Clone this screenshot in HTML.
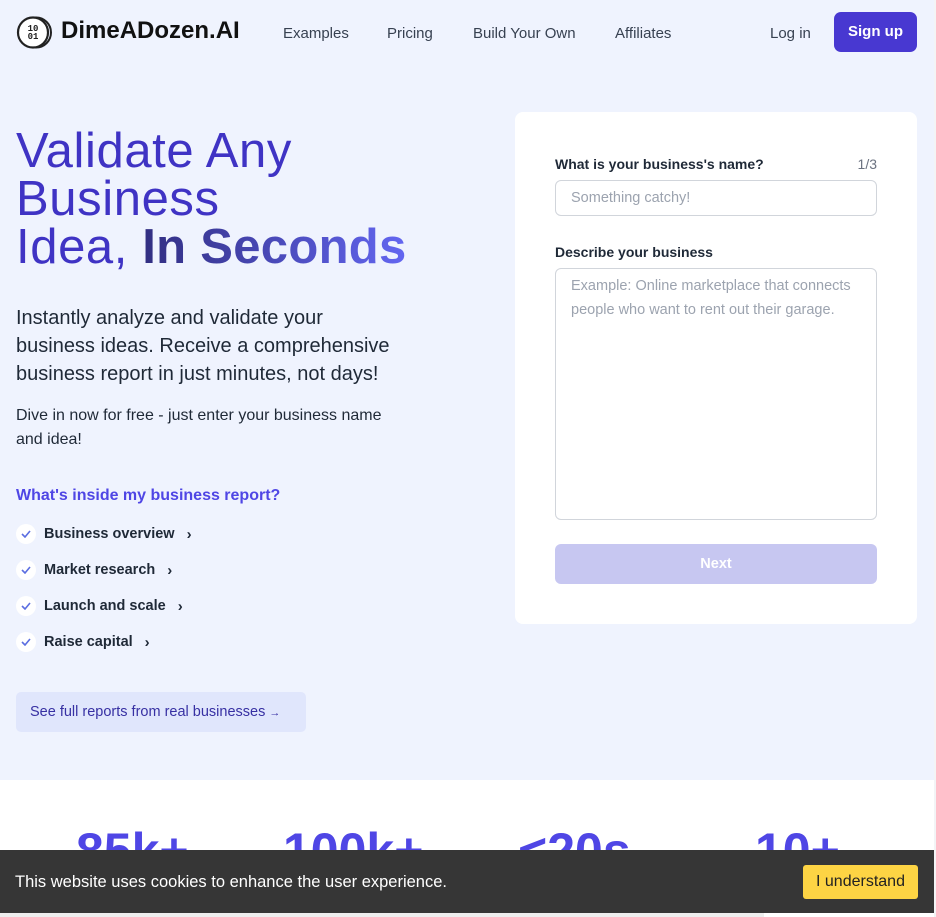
<!DOCTYPE html>
<html><head><meta charset="utf-8"><style>
*{box-sizing:border-box;margin:0;padding:0}
body{width:936px;height:917px;overflow:hidden;background:#eff3fe;font-family:"Liberation Sans",sans-serif;position:relative;color:#1f2937}
.a{position:absolute;white-space:nowrap}
.nav{font-size:15px;color:#374151;top:25px}
h1{position:absolute;left:16px;top:127px;font-size:49px;line-height:48px;font-weight:400;color:#3f33c4;letter-spacing:0.6px}
h1 b{background:linear-gradient(90deg,#312e81,#6366f1);-webkit-background-clip:text;background-clip:text;color:transparent;letter-spacing:0.3px}
.p1{left:16px;top:304px;font-size:20px;line-height:28px;color:#1f2937}
.p2{left:16px;top:404px;font-size:16px;line-height:24px;color:#1f2937}
.li{left:16px;font-size:14.5px;font-weight:bold;color:#1f2937;display:flex;align-items:center}
.ck{width:20px;height:20px;border-radius:50%;background:#fff;margin-right:8px;display:flex;align-items:center;justify-content:center}
.card{position:absolute;left:515px;top:112px;width:402px;height:512px;background:#fff;border-radius:8px}
.lbl{font-size:14px;font-weight:bold;color:#1f2937}
.inp{position:absolute;border:1px solid #d1d5db;border-radius:6px;background:#fff;color:#9ca3af;font-size:14.5px;padding:0 15px}
</style></head><body>
<svg class="a" style="left:16px;top:16px" width="37" height="33" viewBox="0 0 37 33"><ellipse cx="20" cy="16.5" rx="15" ry="15" fill="none" stroke="#222" stroke-width="2"/><circle cx="17" cy="16.5" r="15" fill="#fff" stroke="#222" stroke-width="2.2"/><text x="17" y="15" font-size="9" font-weight="bold" text-anchor="middle" font-family="Liberation Mono" fill="#222">10</text><text x="17" y="23" font-size="9" font-weight="bold" text-anchor="middle" font-family="Liberation Mono" fill="#222">01</text></svg>
<div class="a" style="left:61px;top:17px;font-size:24px;font-weight:bold;color:#111">DimeADozen.AI</div>
<div class="a nav" style="left:283px">Examples</div>
<div class="a nav" style="left:387px">Pricing</div>
<div class="a nav" style="left:473px">Build Your Own</div>
<div class="a nav" style="left:615px">Affiliates</div>
<div class="a nav" style="left:770px">Log in</div>
<div class="a" style="left:834px;top:12px;width:83px;height:40px;background:#4838d1;border-radius:7px;color:#fff;font-weight:bold;font-size:15px;text-align:center;line-height:39px">Sign up</div>
<h1>Validate Any<br>Business<br>Idea, <b>In Seconds</b></h1>
<div class="a p1">Instantly analyze and validate your<br>business ideas. Receive a comprehensive<br>business report in just minutes, not days!</div>
<div class="a p2">Dive in now for free - just enter your business name<br>and idea!</div>
<div class="a" style="left:16px;top:487px;font-size:16px;font-weight:bold;color:#4f46e5">What's inside my business report?</div>
<div class="a li" style="top:524px"><span class="ck"><svg width="10" height="8"><path d="M1 4l3 3 5-6" fill="none" stroke="#5b6ee1" stroke-width="1.6"/></svg></span>Business overview<span style="margin-left:12px;font-size:15px">›</span></div>
<div class="a li" style="top:560px"><span class="ck"><svg width="10" height="8"><path d="M1 4l3 3 5-6" fill="none" stroke="#5b6ee1" stroke-width="1.6"/></svg></span>Market research<span style="margin-left:12px;font-size:15px">›</span></div>
<div class="a li" style="top:596px"><span class="ck"><svg width="10" height="8"><path d="M1 4l3 3 5-6" fill="none" stroke="#5b6ee1" stroke-width="1.6"/></svg></span>Launch and scale<span style="margin-left:12px;font-size:15px">›</span></div>
<div class="a li" style="top:632px"><span class="ck"><svg width="10" height="8"><path d="M1 4l3 3 5-6" fill="none" stroke="#5b6ee1" stroke-width="1.6"/></svg></span>Raise capital<span style="margin-left:12px;font-size:15px">›</span></div>
<div class="a" style="left:16px;top:692px;width:290px;height:40px;background:#e0e6fc;border-radius:5px;color:#3730a3;font-size:14.5px;line-height:40px;padding-left:14px">See full reports from real businesses <span style="font-size:11px">→</span></div>
<div class="card">
<div class="a lbl" style="left:40px;top:44px">What is your business's name?</div>
<div class="a" style="right:40px;top:44px;font-size:14px;color:#6b7280">1/3</div>
<div class="inp" style="left:40px;top:68px;width:322px;height:36px;line-height:34px">Something catchy!</div>
<div class="a lbl" style="left:40px;top:132px">Describe your business</div>
<div class="inp" style="left:40px;top:156px;width:322px;height:252px;line-height:24px;padding-top:5px">Example: Online marketplace that connects<br>people who want to rent out their garage.</div>
<div class="a" style="left:40px;top:432px;width:322px;height:40px;background:#c7c7f1;border-radius:6px;color:#fff;font-weight:bold;font-size:14.5px;text-align:center;line-height:40px">Next</div>
</div>
<div class="a" style="left:0;top:780px;width:934px;height:137px;background:#fff"></div>
<div class="a" style="left:934px;top:0;width:2px;height:917px;background:#f3f4f6"></div>
<div class="a" style="left:76px;top:822px;font-size:50px;font-weight:bold;color:#4f46e5">85k+</div>
<div class="a" style="left:283px;top:822px;font-size:50px;font-weight:bold;color:#4f46e5">100k+</div>
<div class="a" style="left:518px;top:822px;font-size:50px;font-weight:bold;color:#4f46e5">&lt;20s</div>
<div class="a" style="left:755px;top:822px;font-size:50px;font-weight:bold;color:#4f46e5">10+</div>
<div class="a" style="left:0;top:850px;width:934px;height:63px;background:#363636"></div>
<div class="a" style="left:0;top:913px;width:764px;height:4px;background:#eeeeee"></div>
<div class="a" style="left:15px;top:873px;font-size:16.5px;color:#fff">This website uses cookies to enhance the user experience.</div>
<div class="a" style="left:803px;top:865px;width:115px;height:34px;background:#fdd444;border-radius:3px;color:#222;font-size:16px;text-align:center;line-height:34px">I understand</div>
</body></html>
